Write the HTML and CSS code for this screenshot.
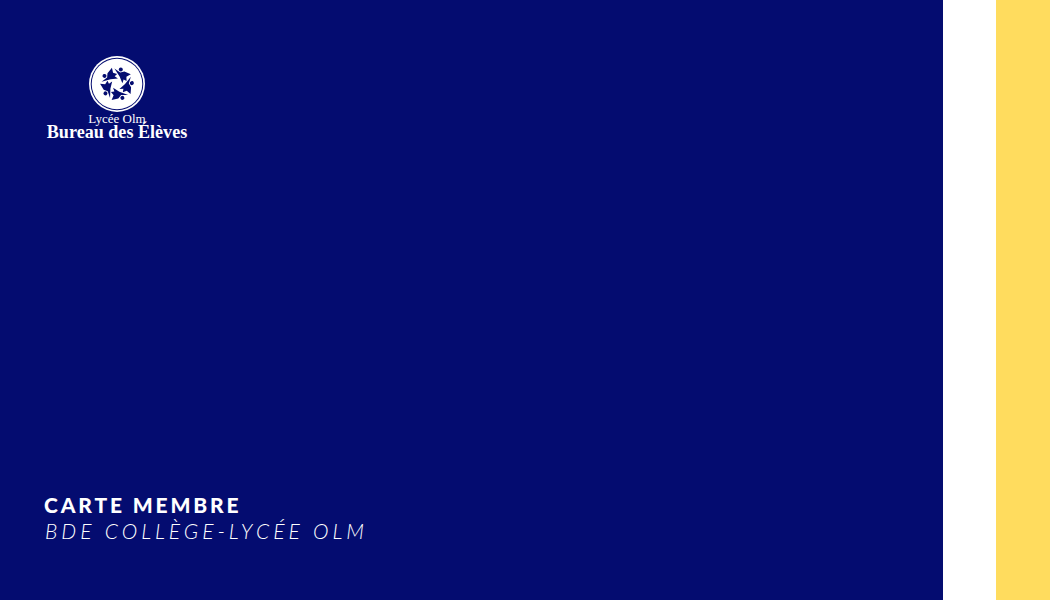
FILE: index.html
```html
<!DOCTYPE html>
<html lang="fr">
<head>
<meta charset="utf-8">
<title>Carte membre</title>
<link rel="stylesheet" href="styles.css">
</head>
<body>
<main class="card">
  <section class="panel">
    <div class="brand">
      <svg class="emblem" viewBox="0 0 56 56" width="56" height="56" aria-hidden="true">
        <circle cx="28" cy="28" r="28" fill="#fff"/>
        <circle cx="28" cy="28" r="26.3" fill="#040c70"/>
        <circle cx="28" cy="28" r="25.3" fill="#fff"/>
        <g fill="#040c70">
          <g id="fig">
            <path d="M25.4 12.6L31.2 16.6L35.4 15.6L41.8 18.2L37.4 20.8L37.6 25L34.6 23.4L33.4 27.2L30.6 20.4z"/>
            <circle cx="31.8" cy="13.6" r="2"/>
          </g>
          <use href="#fig" transform="rotate(72 28 28)"/>
          <use href="#fig" transform="rotate(144 28 28)"/>
          <use href="#fig" transform="rotate(216 28 28)"/>
          <use href="#fig" transform="rotate(288 28 28)"/>
        </g>
      </svg>
      <p class="brand-sub">Lycée Olm</p>
      <p class="brand-name">Bureau des Élèves</p>
    </div>
    <div class="caption">
      <h1 class="caption-title">CARTE MEMBRE</h1>
      <p class="caption-sub">BDE COLLÈGE-LYCÉE OLM</p>
    </div>
  </section>
  <div class="stripe-white"></div>
  <div class="stripe-yellow"></div>
</main>
</body>
</html>
```

FILE: styles.css
```css
* { box-sizing: border-box; }
html, body { margin: 0; padding: 0; }
body { width: 1050px; height: 600px; overflow: hidden; background: #fff; }
.card { display: flex; width: 1050px; height: 600px; }
.panel {
  width: 943px;
  background: #040c70;
  color: #fff;
  padding: 56px 0 56px 44px;
  display: flex;
  flex-direction: column;
  justify-content: space-between;
}
.stripe-white { width: 53px; background: #fff; }
.stripe-yellow { flex: 1; background: #ffdc5e; }
.brand { width: 146px; display: flex; flex-direction: column; align-items: center; }
.emblem { display: block; flex: none; }
.brand-sub {
  margin: 0;
  font: 13px/14px "Liberation Serif", serif;
}
.brand-name {
  margin: -4px 0 0;
  font: bold 18.1px/20px "Liberation Serif", serif;
  white-space: nowrap;
}
.caption { font-family: "Lato", sans-serif; }
.caption-title {
  margin: 0;
  font-size: 21px;
  line-height: 26px;
  font-weight: 900;
  letter-spacing: 2.85px;
}
.caption-sub {
  margin: 0 0 0 1px;
  font-size: 21px;
  line-height: 26px;
  font-weight: 300;
  font-style: italic;
  letter-spacing: 4px;
}
```
